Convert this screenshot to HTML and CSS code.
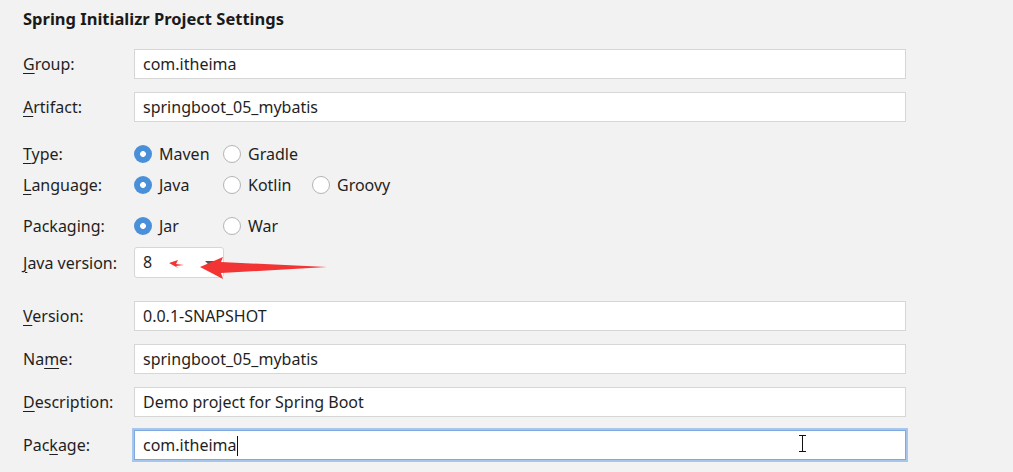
FILE: index.html
```html
<!DOCTYPE html>
<html>
<head>
<meta charset="utf-8">
<link rel="stylesheet" href="styles.css">
</head>
<body>
<div class="panel">
  <h1 class="title">Spring Initializr Project Settings</h1>
  <div class="row r-group"><label class="lbl"><u>G</u>roup:</label><div class="field">com.itheima</div></div>
  <div class="row r-artifact"><label class="lbl"><u>A</u>rtifact:</label><div class="field">springboot_05_mybatis</div></div>
  <div class="row r-type"><label class="lbl"><u>T</u>ype:</label>
    <div class="radios">
      <span class="opt"><span class="radio on"></span>Maven</span>
      <span class="opt"><span class="radio"></span>Gradle</span>
    </div>
  </div>
  <div class="row r-lang"><label class="lbl"><u>L</u>anguage:</label>
    <div class="radios">
      <span class="opt"><span class="radio on"></span>Java</span>
      <span class="opt"><span class="radio"></span>Kotlin</span>
      <span class="opt"><span class="radio"></span>Groovy</span>
    </div>
  </div>
  <div class="row r-pack"><label class="lbl">Packaging:</label>
    <div class="radios">
      <span class="opt"><span class="radio on"></span>Jar</span>
      <span class="opt"><span class="radio"></span>War</span>
    </div>
  </div>
  <div class="row r-java"><label class="lbl"><u>J</u>ava version:</label>
    <div class="combo">8<span class="caret-down"></span>
      <svg class="arrows" width="200" height="40" viewBox="0 0 200 40">
        <polygon points="34,15 43,12 41,16 49,17 41,18 43,20" fill="#f33434"/>
        <polygon points="65,19 88,9 86,14 192,19 86,25 88,31" fill="#f33434"/>
      </svg>
    </div>
  </div>
  <div class="row r-version"><label class="lbl"><u>V</u>ersion:</label><div class="field">0.0.1-SNAPSHOT</div></div>
  <div class="row r-name"><label class="lbl">Na<u>m</u>e:</label><div class="field">springboot_05_mybatis</div></div>
  <div class="row r-desc"><label class="lbl"><u>D</u>escription:</label><div class="field">Demo project for Spring Boot</div></div>
  <div class="row r-package"><label class="lbl">Pac<u>k</u>age:</label><div class="field focus">com.itheima<span class="tcaret"></span><span class="ibeam"></span></div></div>
</div>
</body>
</html>
```

FILE: styles.css
```css
html, body {
  margin: 0;
  padding: 0;
  background: #f2f2f2;
}
body {
  width: 1013px;
  height: 472px;
  overflow: hidden;
  font-family: "Noto Sans", "Open Sans", sans-serif;
  font-size: 16px;
  color: #1f1f1f;
}
.panel {
  padding: 0 0 0 23px;
}
.title {
  margin: 0;
  padding-top: 7px;
  height: 24px;
  font-size: 16.5px;
  line-height: 24px;
  font-weight: 700;
  color: #1a1a1a;
}
.row {
  display: flex;
  align-items: center;
}
.lbl {
  width: 111px;
  flex: none;
}
.lbl u {
  text-decoration-thickness: 1px;
  text-underline-offset: 3px;
}
.field {
  box-sizing: border-box;
  width: 772px;
  height: 30px;
  background: #fff;
  border: 1px solid #d6d6d6;
  padding: 0 8px;
  line-height: 28px;
  position: relative;
}
.field.focus {
  border: 1px solid #7fa9de;
  box-shadow: 0 0 0 2px #a7c6ec;
}
.r-group { margin-top: 18px; height: 30px; }
.r-artifact { margin-top: 13px; height: 30px; }
.r-type { margin-top: 21px; height: 22px; }
.r-lang { margin-top: 9px; height: 22px; }
.r-pack { margin-top: 19px; height: 22px; }
.r-java { margin-top: 10px; height: 31px; }
.r-version { margin-top: 23px; height: 30px; }
.r-name { margin-top: 13px; height: 30px; }
.r-desc { margin-top: 13px; height: 30px; }
.r-package { margin-top: 13px; height: 30px; }

.radios {
  display: flex;
}
.opt {
  width: 89px;
  display: flex;
  align-items: center;
  gap: 7px;
}
.radio {
  box-sizing: border-box;
  width: 18px;
  height: 18px;
  border-radius: 50%;
  border: 1px solid #b4b4b4;
  background: #fff;
  flex: none;
}
.radio.on {
  border: none;
  background: radial-gradient(circle, #fff 0 2.6px, #4a90d9 3.2px);
}
.combo {
  box-sizing: border-box;
  width: 90px;
  height: 31px;
  background: #fff;
  border: 1px solid #d6d6d6;
  border-radius: 3px;
  padding: 0 8px;
  line-height: 29px;
  position: relative;
}
.caret-down {
  position: absolute;
  left: 70px;
  top: 13px;
  width: 0;
  height: 0;
  border-left: 5px solid transparent;
  border-right: 5px solid transparent;
  border-top: 5px solid #555;
}
.arrows {
  position: absolute;
  left: 0;
  top: 0;
  overflow: visible;
}
.tcaret {
  display: inline-block;
  width: 1px;
  height: 20px;
  background: #111;
  vertical-align: -5px;
}
.ibeam {
  position: absolute;
  left: 664px;
  top: 4px;
  width: 7px;
  height: 15px;
  border-top: 1px solid #111;
  border-bottom: 1px solid #111;
  background: linear-gradient(#111, #111) center / 1px 100% no-repeat;
}
```
